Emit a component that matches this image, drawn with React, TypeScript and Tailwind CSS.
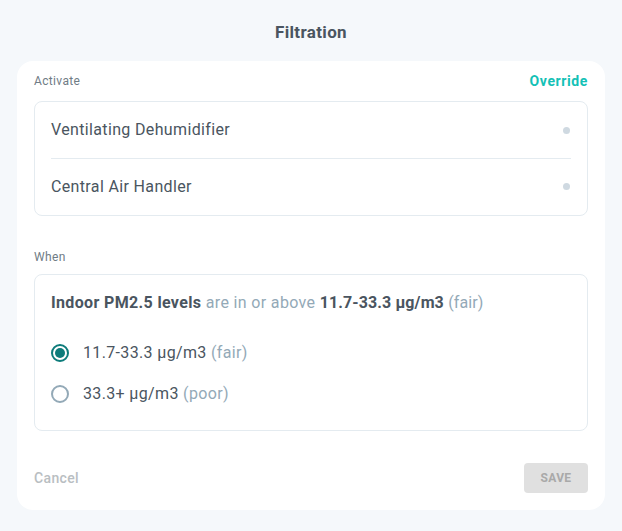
import { useState } from 'react'

const devices = ['Ventilating Dehumidifier', 'Central Air Handler']

const levels = [
  { id: 'fair', value: '11.7-33.3 µg/m3', label: '(fair)' },
  { id: 'poor', value: '33.3+ µg/m3', label: '(poor)' },
]

export default function App() {
  const [level, setLevel] = useState('fair')
  const selected = levels.find((l) => l.id === level)!

  return (
    <div className="min-h-screen bg-[#f5f8fb] pt-5 font-['Roboto',sans-serif] tracking-[0.35px] text-[#4a5560]">
      <h1 className="text-center text-[17px] leading-6 font-bold text-[#4a5560]">Filtration</h1>

      <div className="mx-[17px] mt-[17px] rounded-2xl bg-white px-[17px] pt-[10px] pb-[17px]">
        {/* Activate */}
        <div className="flex h-5 items-center justify-between">
          <span className="text-xs text-[#6f7c85]">Activate</span>
          <button className="text-sm font-bold tracking-[0.6px] text-[#14c1b6]">Override</button>
        </div>

        <div className="mt-[10px] rounded-lg border border-[#e4ebf0] px-4 pb-[1px]">
          {devices.map((name, i) => (
            <div
              key={name}
              className={`flex h-14 items-center justify-between ${i > 0 ? 'border-t border-[#e4ebf0]' : ''}`}
            >
              <span className="text-base">{name}</span>
              <span className="mr-[1px] h-[7px] w-[7px] rounded-full bg-[#cfd9e1]"></span>
            </div>
          ))}
        </div>

        {/* When */}
        <div className="mt-[31px] h-5 text-xs leading-5 text-[#6f7c85]">When</div>

        <div className="mt-[7px] rounded-lg border border-[#e4ebf0] px-4 pt-4 pb-6">
          <p className="text-base leading-6">
            <span className="font-bold">Indoor PM2.5 levels</span>{' '}
            <span className="text-[#93a9b7]">are in or above</span>{' '}
            <span className="font-bold tracking-[0.1px]">{selected.value}</span>{' '}
            <span className="tracking-[0.1px] text-[#93a9b7]">{selected.label}</span>
          </p>

          <div className="mt-[26px] flex flex-col gap-[17px]">
            {levels.map((l) => {
              const on = l.id === level
              return (
                <label key={l.id} className="flex h-6 cursor-pointer items-center gap-[14px]" onClick={() => setLevel(l.id)}>
                  <span
                    className={`flex h-[18px] w-[18px] items-center justify-center rounded-full border-2 ${
                      on ? 'border-[#0e7c7b]' : 'border-[#93a9b7]'
                    }`}
                  >
                    {on && <span className="h-[10px] w-[10px] rounded-full bg-[#0e7c7b]"></span>}
                  </span>
                  <span className="text-base">
                    {l.value} <span className="text-[#93a9b7]">{l.label}</span>
                  </span>
                </label>
              )
            })}
          </div>
        </div>

        {/* Footer */}
        <div className="mt-8 flex items-center justify-between">
          <button className="text-sm font-medium text-[#b9bec2]">Cancel</button>
          <button className="h-[30px] w-16 rounded bg-[#e0e0e0] text-xs font-bold text-[#a9a9a9]">SAVE</button>
        </div>
      </div>
    </div>
  )
}
